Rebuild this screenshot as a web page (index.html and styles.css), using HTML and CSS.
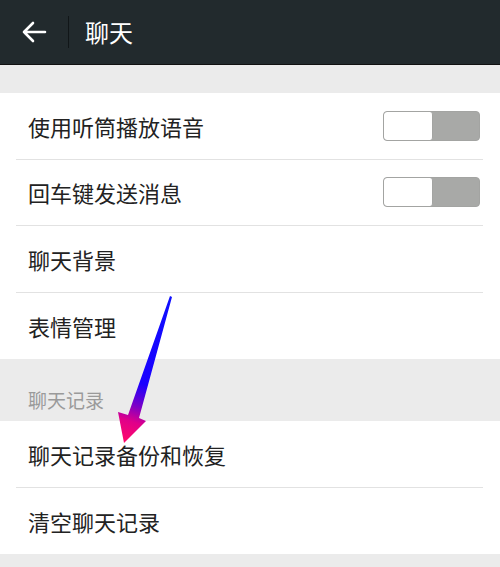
FILE: index.html
```html
<!DOCTYPE html>
<html>
<head>
<meta charset="utf-8">
<link rel="stylesheet" href="styles.css">
</head>
<body>
<div class="page">
  <header class="topbar">
    <svg class="back" width="26" height="22" viewBox="0 0 26 22"><path d="M24 11H3M12 2L3 11l9 9" fill="none" stroke="#fff" stroke-width="2.6" stroke-linecap="round" stroke-linejoin="round"/></svg>
    <div class="divider"></div>
    <div class="title">聊天</div>
  </header>
  <div class="gap"></div>
  <div class="group">
    <div class="row"><span>使用听筒播放语音</span><div class="toggle"><div class="knob"></div></div></div>
    <div class="row"><span>回车键发送消息</span><div class="toggle"><div class="knob"></div></div></div>
    <div class="row"><span>聊天背景</span></div>
    <div class="row last"><span>表情管理</span></div>
  </div>
  <div class="section">聊天记录</div>
  <div class="group">
    <div class="row"><span>聊天记录备份和恢复</span></div>
    <div class="row last"><span>清空聊天记录</span></div>
  </div>
  <div class="bottom"></div>
  <svg class="arrow" width="500" height="567" viewBox="0 0 500 567">
    <defs>
      <linearGradient id="g" x1="171" y1="297" x2="125" y2="442" gradientUnits="userSpaceOnUse">
        <stop offset="0" stop-color="#1010ff"/>
        <stop offset="0.6" stop-color="#1a00ff"/>
        <stop offset="0.75" stop-color="#7a00c8"/>
        <stop offset="0.86" stop-color="#e0008a"/>
        <stop offset="1" stop-color="#ff0a6a"/>
      </linearGradient>
    </defs>
    <polygon points="170,296 172,297 139,418 146,421 124,443 118,412 128,415" fill="url(#g)"/>
  </svg>
</div>
</body>
</html>
```
FILE: styles.css
```css
* { box-sizing: border-box; }
html, body { margin: 0; padding: 0; }
body { width: 500px; height: 567px; overflow: hidden; background: #ebebeb; font-family: "Noto Sans CJK SC", "Noto Sans", sans-serif; }
.page { position: relative; width: 500px; height: 567px; }
.topbar { height: 65px; background: #222a2d; border-bottom: 1px solid #111; display: flex; align-items: center; }
.back { margin-left: 21px; }
.divider { width: 1px; height: 32px; background: #111618; margin-left: 21px; }
.title { color: #fff; font-size: 24px; margin-left: 16px; line-height: 1; }
.gap { height: 28px; background: #ebebeb; }
.group { background: #fff; padding: 0 17px 0 16px; }
.row { height: 66.5px; display: flex; align-items: center; justify-content: space-between; border-bottom: 1px solid #e2e2e2; font-size: 22px; color: #222; padding-left: 12px; }
.row.last { border-bottom: none; }
.toggle { width: 97px; height: 30px; border: 1px solid #a3a4a2; border-radius: 4px; background: #a8a9a7; margin-right: 3px; overflow: hidden; display: flex; }
.knob { width: 49px; height: 100%; background: #fff; border-right: 1px solid #a3a4a2; border-radius: 3px; }
.section { height: 62px; background: #ebebeb; color: #9a9a9a; font-size: 19px; padding: 31px 0 0 28px; line-height: 1; }
.bottom { height: 14px; background: #ebebeb; }
.arrow { position: absolute; left: 0; top: 0; pointer-events: none; }
```
